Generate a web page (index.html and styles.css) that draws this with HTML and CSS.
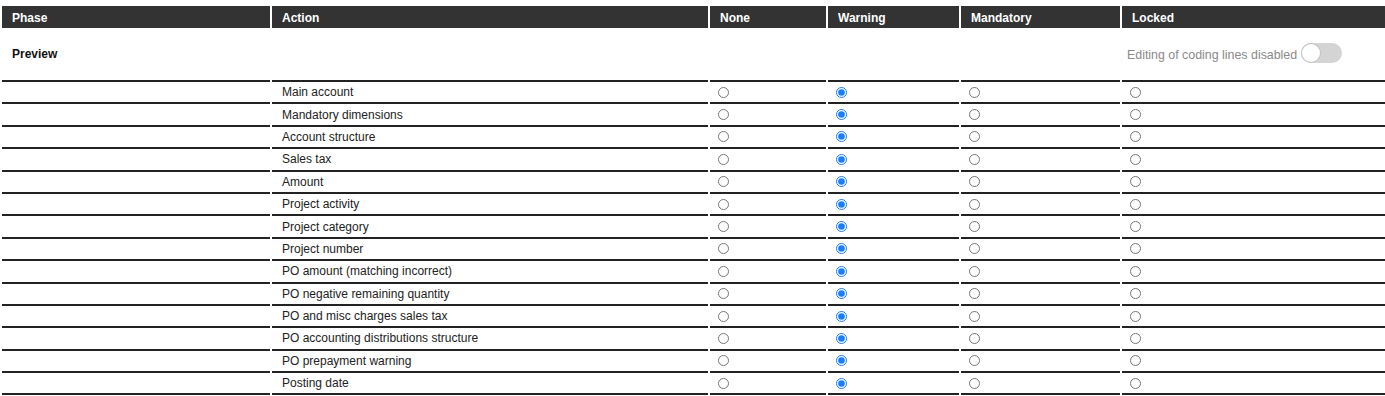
FILE: index.html
```html
<!DOCTYPE html>
<html>
<head>
<meta charset="utf-8">
<link rel="stylesheet" href="styles.css">
</head>
<body>
<table class="grid">
  <colgroup>
    <col class="c-phase"><col class="c-action"><col class="c-none"><col class="c-warn"><col class="c-mand"><col class="c-lock">
  </colgroup>
  <thead>
    <tr>
      <th>Phase</th><th>Action</th><th>None</th><th>Warning</th><th>Mandatory</th><th>Locked</th>
    </tr>
  </thead>
  <tbody>
    <tr class="phase-row">
      <td class="phase-name">Preview</td>
      <td class="blank"></td><td class="blank"></td><td class="blank"></td><td class="blank"></td>
      <td class="blank">
        <div class="toggle-wrap">
          <span class="toggle-label">Editing of coding lines disabled</span>
          <span class="toggle"><span class="knob"></span></span>
        </div>
      </td>
    </tr>
    <tr><td></td><td class="act">Main account</td><td class="rad"><input type="radio" name="r1"></td><td class="rad"><input type="radio" name="r1" checked></td><td class="rad"><input type="radio" name="r1"></td><td class="rad"><input type="radio" name="r1"></td></tr>
    <tr><td></td><td class="act">Mandatory dimensions</td><td class="rad"><input type="radio" name="r2"></td><td class="rad"><input type="radio" name="r2" checked></td><td class="rad"><input type="radio" name="r2"></td><td class="rad"><input type="radio" name="r2"></td></tr>
    <tr><td></td><td class="act">Account structure</td><td class="rad"><input type="radio" name="r3"></td><td class="rad"><input type="radio" name="r3" checked></td><td class="rad"><input type="radio" name="r3"></td><td class="rad"><input type="radio" name="r3"></td></tr>
    <tr><td></td><td class="act">Sales tax</td><td class="rad"><input type="radio" name="r4"></td><td class="rad"><input type="radio" name="r4" checked></td><td class="rad"><input type="radio" name="r4"></td><td class="rad"><input type="radio" name="r4"></td></tr>
    <tr><td></td><td class="act">Amount</td><td class="rad"><input type="radio" name="r5"></td><td class="rad"><input type="radio" name="r5" checked></td><td class="rad"><input type="radio" name="r5"></td><td class="rad"><input type="radio" name="r5"></td></tr>
    <tr><td></td><td class="act">Project activity</td><td class="rad"><input type="radio" name="r6"></td><td class="rad"><input type="radio" name="r6" checked></td><td class="rad"><input type="radio" name="r6"></td><td class="rad"><input type="radio" name="r6"></td></tr>
    <tr><td></td><td class="act">Project category</td><td class="rad"><input type="radio" name="r7"></td><td class="rad"><input type="radio" name="r7" checked></td><td class="rad"><input type="radio" name="r7"></td><td class="rad"><input type="radio" name="r7"></td></tr>
    <tr><td></td><td class="act">Project number</td><td class="rad"><input type="radio" name="r8"></td><td class="rad"><input type="radio" name="r8" checked></td><td class="rad"><input type="radio" name="r8"></td><td class="rad"><input type="radio" name="r8"></td></tr>
    <tr><td></td><td class="act">PO amount (matching incorrect)</td><td class="rad"><input type="radio" name="r9"></td><td class="rad"><input type="radio" name="r9" checked></td><td class="rad"><input type="radio" name="r9"></td><td class="rad"><input type="radio" name="r9"></td></tr>
    <tr><td></td><td class="act">PO negative remaining quantity</td><td class="rad"><input type="radio" name="r10"></td><td class="rad"><input type="radio" name="r10" checked></td><td class="rad"><input type="radio" name="r10"></td><td class="rad"><input type="radio" name="r10"></td></tr>
    <tr><td></td><td class="act">PO and misc charges sales tax</td><td class="rad"><input type="radio" name="r11"></td><td class="rad"><input type="radio" name="r11" checked></td><td class="rad"><input type="radio" name="r11"></td><td class="rad"><input type="radio" name="r11"></td></tr>
    <tr><td></td><td class="act">PO accounting distributions structure</td><td class="rad"><input type="radio" name="r12"></td><td class="rad"><input type="radio" name="r12" checked></td><td class="rad"><input type="radio" name="r12"></td><td class="rad"><input type="radio" name="r12"></td></tr>
    <tr><td></td><td class="act">PO prepayment warning</td><td class="rad"><input type="radio" name="r13"></td><td class="rad"><input type="radio" name="r13" checked></td><td class="rad"><input type="radio" name="r13"></td><td class="rad"><input type="radio" name="r13"></td></tr>
    <tr><td></td><td class="act">Posting date</td><td class="rad"><input type="radio" name="r14"></td><td class="rad"><input type="radio" name="r14" checked></td><td class="rad"><input type="radio" name="r14"></td><td class="rad"><input type="radio" name="r14"></td></tr>
  </tbody>
</table>
</body>
</html>
```

FILE: styles.css
```css
html, body {
  margin: 0;
  padding: 0;
  background: #fff;
  overflow: hidden;
}

body {
  font-family: "Liberation Sans", Arial, sans-serif;
  font-size: 12px;
  color: #222;
}

.grid {
  border-collapse: separate;
  border-spacing: 2px 0;
  margin-top: 6px;
  width: 1389px;
  table-layout: fixed;
}

.c-phase { width: 268px; }
.c-action { width: 436px; }
.c-none { width: 116px; }
.c-warn { width: 131px; }
.c-mand { width: 159px; }
.c-lock { width: 265px; }

.grid th {
  background: #333;
  color: #fff;
  font-weight: bold;
  text-align: left;
  height: 22px;
  padding: 1px 10px 0;
  vertical-align: middle;
  box-sizing: border-box;
}

.grid td {
  padding: 0 10px;
  border-bottom: 2px solid #222;
  vertical-align: middle;
  box-sizing: border-box;
  height: 22.4px;
}

.phase-row td {
  height: 54px;
}

.grid td.phase-name {
  font-weight: bold;
  color: #111;
  padding-bottom: 1px;
}

.act {
  color: #222;
  white-space: nowrap;
}

.grid td.rad {
  padding-left: 8px;
  line-height: 0;
}

.rad input {
  width: 11px;
  height: 11px;
  margin: 0;
  vertical-align: middle;
  accent-color: #1a7cff;
}

.grid td.blank {
  padding-left: 5px;
  padding-bottom: 2px;
}

.toggle-wrap {
  display: flex;
  align-items: center;
  gap: 4px;
}

.toggle-label {
  color: #8a8a8a;
  font-size: 12.4px;
  margin-top: 4px;
}

.toggle {
  display: inline-flex;
  align-items: center;
  width: 41px;
  height: 20px;
  border-radius: 10px;
  background: #d4d4d4;
  padding: 0 1px;
  box-sizing: border-box;
}

.knob {
  width: 18px;
  height: 18px;
  border-radius: 50%;
  background: #fff;
  box-shadow: 0 0 0 1px #c4c4c4;
}
```
